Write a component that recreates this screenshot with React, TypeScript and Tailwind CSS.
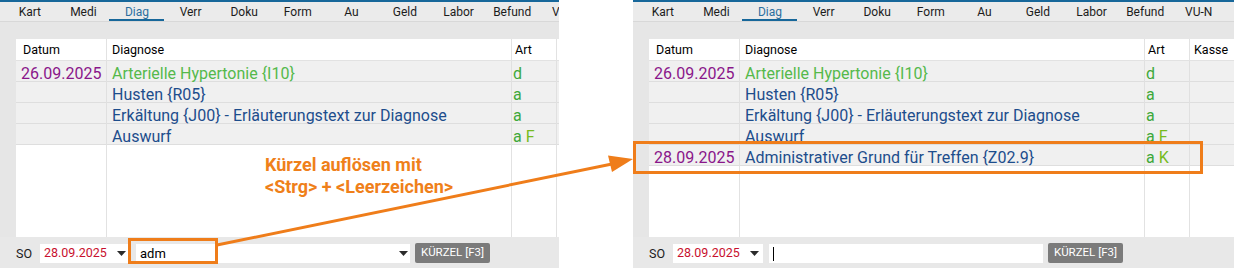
import React from "react";

const tabs = ["Kart", "Medi", "Diag", "Verr", "Doku", "Form", "Au", "Geld", "Labor", "Befund", "VU-N"];

type Row = { date?: string; text: string; green?: boolean; art: string; flag?: string };

const rows: Row[] = [
  { date: "26.09.2025", text: "Arterielle Hypertonie {I10}", green: true, art: "d" },
  { text: "Husten {R05}", art: "a" },
  { text: "Erkältung {J00} - Erläuterungstext zur Diagnose", art: "a" },
  { text: "Auswurf", art: "a", flag: "F" },
];

function Triangle() {
  return (
    <svg width="9" height="5" viewBox="0 0 9 5" className="shrink-0">
      <path d="M0 0 H9 L4.5 5 Z" fill="#2b2b2b" />
    </svg>
  );
}

function Panel({ after }: { after?: boolean }) {
  const list: Row[] = after
    ? [...rows, { date: "28.09.2025", text: "Administrativer Grund für Treffen {Z02.9}", art: "a", flag: "K" }]
    : rows;
  return (
    <div className="w-[601px] h-[268px] flex flex-col bg-[#e6e6e6] font-['Roboto',sans-serif]">
      <div className="h-[2px] bg-[#17679a]" />
      <div className="h-[20px] flex pl-[3px] bg-[#ebebeb] border-b border-[#d8d8d8]">
        {tabs.map((t) => (
          <div key={t} className="w-[53.6px] shrink-0 flex flex-col items-center">
            <span className={`pt-[3px] text-[12px] leading-[14px] whitespace-nowrap ${t === "Diag" ? "text-[#2b6f9f]" : "text-[#1c1c1c]"}`}>{t}</span>
            {t === "Diag" && <div className="mt-auto w-[55px] h-[2px] bg-[#17679a]" />}
          </div>
        ))}
      </div>
      <div className="h-[17px]" />
      <div className="flex-1 ml-[16px] flex flex-col bg-white">
        <div className="grid grid-cols-[91px_405px_45px_1fr] h-[22px] text-[12.5px] leading-[20px] text-black border-b border-[#e2e2e2]">
          <div className="pl-[7px] pt-[1px] border-r border-[#e2e2e2]">Datum</div>
          <div className="pl-[5px] pt-[1px] border-r border-[#e2e2e2]">Diagnose</div>
          <div className="pl-[3px] pt-[1px] border-r border-[#e2e2e2]">Art</div>
          <div className="pl-[4px] pt-[1px]">Kasse</div>
        </div>
        {list.map((r, i) => (
          <div key={i} className="grid grid-cols-[91px_405px_45px_1fr] h-[21px] text-[16px] leading-[21px] bg-[#f0f0f0] border-b border-[#dedede]">
            <div className="pl-[5px] pt-[1.5px] text-[#8a168a] border-r border-[#e0e0e0]">{r.date ?? ""}</div>
            <div className={`pl-[5px] pt-[1.5px] whitespace-nowrap border-r border-[#e0e0e0] ${r.green ? "text-[#55b94b]" : "text-[#1d4d8c]"}`}>{r.text}</div>
            <div className="pl-[1px] pt-[1.5px] text-[#3ea83a] border-r border-[#e0e0e0]">
              {r.art}
              {r.flag && <span className="text-[#76bb1e]"> {r.flag}</span>}
            </div>
            <div />
          </div>
        ))}
        <div className="flex-1 grid grid-cols-[91px_405px_45px_1fr]">
          <div className="border-r border-[#e2e2e2]" />
          <div className="border-r border-[#e2e2e2]" />
          <div className="border-r border-[#e2e2e2]" />
          <div />
        </div>
      </div>
      <div className="h-[31px] flex items-start pt-[7px] pl-[16px] bg-[#e8e8e8]">
        <span className="w-[24px] text-[12.5px] leading-[19px] text-[#1c1c1c]">SO</span>
        <div className="w-[90px] h-[19px] bg-white flex items-center pl-[4px] pr-[4px]">
          <span className="text-[12.5px] text-[#c8102e] flex-1">28.09.2025</span>
          <Triangle />
        </div>
        <div className="ml-[6px] w-[274px] h-[19px] bg-white flex items-center pl-[4px] pr-[2px]">
          {after ? (
            <div className="w-[1px] h-[14px] bg-black" />
          ) : (
            <>
              <span className="flex-1 text-[13px] text-black">adm</span>
              <Triangle />
            </>
          )}
        </div>
        <div className="ml-[5px] -mt-[1px] w-[75px] h-[20px] rounded-[2px] bg-[#7b7b7b] flex items-center justify-center text-[11.5px] text-white">
          KÜRZEL [F3]
        </div>
      </div>
    </div>
  );
}

export default function App() {
  return (
    <div className="relative w-[1234px] h-[268px] bg-white flex overflow-hidden">
      <div className="w-[559px] h-[268px] overflow-hidden shrink-0">
        <Panel />
      </div>
      <div className="w-[74px] shrink-0" />
      <div className="w-[601px] h-[268px] overflow-hidden shrink-0">
        <Panel after />
      </div>

      {/* annotation */}
      <div className="absolute left-[128px] top-[238px] w-[90px] h-[26px] border-[3px] border-[#ef7d1a]" />
      <div className="absolute left-[633px] top-[141px] w-[570px] h-[33px] border-[3px] border-[#ef7d1a]" />
      <svg className="absolute left-0 top-0 pointer-events-none" width="1234" height="268">
        <line x1="217" y1="245" x2="612" y2="164" stroke="#ef7d1a" strokeWidth="3" />
        <path d="M633 159 L608 155.5 L612 172 Z" fill="#ef7d1a" />
      </svg>
      <div className="absolute left-[265px] top-[154px] font-['Roboto',sans-serif] font-bold text-[18px] leading-[22px] text-[#ef801a]">
        <div>Kürzel auflösen mit</div>
        <div>&lt;Strg&gt; + &lt;Leerzeichen&gt;</div>
      </div>
    </div>
  );
}
